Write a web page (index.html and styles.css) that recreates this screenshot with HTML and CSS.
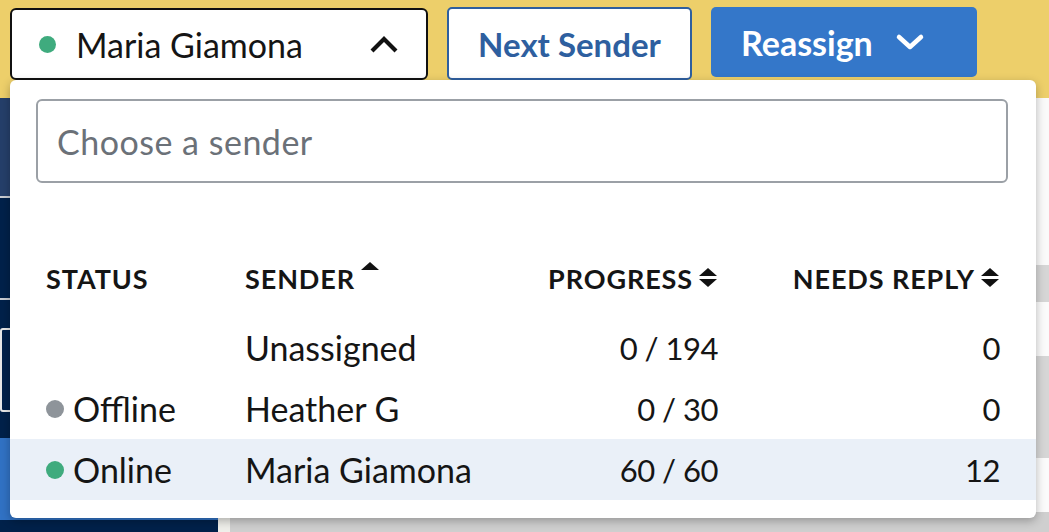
FILE: index.html
```html
<!DOCTYPE html>
<html>
<head>
<meta charset="utf-8">
<link rel="stylesheet" href="styles.css">
</head>
<body>
<div class="app">
  <header class="topbar">
    <div class="sender-select">
      <span class="dot dot-online"></span>
      <span class="select-label">Maria Giamona</span>
      <svg class="chev" width="30" height="19" viewBox="0 0 30 19"><path d="M3 16 L15 4 L27 16" fill="none" stroke="#111" stroke-width="4.2"/></svg>
    </div>
    <button class="btn btn-outline">Next Sender</button>
    <button class="btn btn-primary">Reassign
      <svg class="chev-down" width="30" height="18" viewBox="0 0 30 18"><path d="M4 4 L15 14 L26 4" fill="none" stroke="#fff" stroke-width="4.5" stroke-linecap="round" stroke-linejoin="round"/></svg>
    </button>
  </header>
  <div class="body-area">
    <aside class="sidebar">
      <div class="side-item side-active"></div>
      <div class="side-item"></div>
      <div class="side-item side-box"></div>
      <div class="side-item side-gap"></div>
      <div class="side-item side-blue"></div>
    </aside>
    <main class="main">
      <div class="main-edge"></div>
      <div class="main-content">
        <div class="band band-light"></div>
        <div class="band band-gray b1"></div>
        <div class="band band-white b2"></div>
        <div class="band band-gray b3"></div>
        <div class="band band-white b4"></div>
        <div class="band band-gray b5"></div>
      </div>
    </main>
  </div>

  <div class="dropdown">
    <div class="search">Choose a sender</div>
    <div class="table">
      <div class="trow thead">
        <div class="cell">STATUS</div>
        <div class="cell">SENDER<span class="sort-up"></span></div>
        <div class="cell right">PROGRESS<span class="sort-both"></span></div>
        <div class="cell right">NEEDS REPLY<span class="sort-both"></span></div>
      </div>
      <div class="trow">
        <div class="cell"></div>
        <div class="cell">Unassigned</div>
        <div class="cell right num">0 / 194</div>
        <div class="cell right num">0</div>
      </div>
      <div class="trow">
        <div class="cell"><span class="dot dot-offline"></span>Offline</div>
        <div class="cell">Heather G</div>
        <div class="cell right num">0 / 30</div>
        <div class="cell right num">0</div>
      </div>
      <div class="trow selected">
        <div class="cell"><span class="dot dot-online"></span>Online</div>
        <div class="cell">Maria Giamona</div>
        <div class="cell right num">60 / 60</div>
        <div class="cell right num">12</div>
      </div>
    </div>
  </div>
</div>
</body>
</html>
```

FILE: styles.css
```css
* { box-sizing: border-box; }
html, body { margin: 0; padding: 0; }
body {
  width: 1049px;
  height: 532px;
  overflow: hidden;
  font-family: Lato, "Liberation Sans", sans-serif;
  color: #151515;
  background: #f4f4f2;
}
.app { position: relative; width: 1049px; height: 532px; }

.topbar {
  height: 98px;
  background: #edcf6a;
  display: flex;
  align-items: flex-start;
  padding: 7px 0 0 10px;
}
.sender-select {
  width: 418px;
  height: 72px;
  margin-top: 1px;
  border: 2px solid #111;
  border-radius: 6px;
  background: #fff;
  display: flex;
  align-items: center;
  padding: 0 27px 0 27px;
}
.sender-select .dot { width: 17px; height: 17px; margin-right: 20px; }
.select-label { font-size: 34px; flex: 1; }
.chev { display: block; }

.btn {
  font-family: inherit;
  font-weight: 700;
  font-size: 33px;
  border-radius: 5px;
  display: flex;
  align-items: center;
  justify-content: center;
  cursor: pointer;
}
.btn-outline {
  margin-left: 19px;
  width: 245px;
  height: 73px;
  background: #fff;
  color: #2e5f9f;
  border: 2px solid #2e5f9f;
}
.btn-primary {
  margin-left: 19px;
  width: 266px;
  height: 70px;
  background: #3477c9;
  color: #fff;
  border: none;
  justify-content: flex-start;
  padding: 0 0 0 30px;
  font-size: 34px;
}
.chev-down { margin-left: 22px; display: block; }

.body-area { display: flex; height: 434px; }
.sidebar {
  width: 218px;
  background: #00214a;
  display: flex;
  flex-direction: column;
}
.side-item { height: 102px; border-bottom: 2px solid #c9ccd2; }
.side-active { height: 100px; background: #253f6a; }
.side-box {
  height: 84px;
  margin-top: 28px;
  border: 2px solid #e8e8e8;
  border-radius: 3px;
}
.side-gap { height: 26px; border: none; }
.side-blue { height: 82px; background: #3172c4; border: none; }

.main { flex: 1; display: flex; }
.main-edge { width: 12px; background: #efefea; }
.main-content { flex: 1; display: flex; flex-direction: column; background: #fafafa; }
.band { flex: none; }
.band-light { height: 167px; background: #fafafa; }
.band-gray { background: #d6d6d6; }
.band-white { background: #fbfbfb; }
.b1 { height: 37px; }
.b2 { height: 54px; }
.b3 { height: 102px; }
.b4 { height: 54px; }
.b5 { height: 20px; background: #cfcfcf; }

.dropdown {
  position: absolute;
  left: 10px;
  top: 80px;
  width: 1026px;
  height: 438px;
  background: #fff;
  border-radius: 6px;
  box-shadow: 0 3px 10px rgba(0,0,0,0.28);
  padding: 19px 28px 0 26px;
}
.search {
  height: 84px;
  border: 2px solid #9ba0a6;
  border-radius: 6px;
  display: flex;
  align-items: center;
  padding-left: 19px;
  font-size: 34px;
  color: #6b7178;
  letter-spacing: 0.5px;
}
.table { margin: 65px -28px 0 -26px; }
.trow {
  display: grid;
  grid-template-columns: 199px 260px 213px 282px;
  padding-left: 36px;
  height: 61px;
  align-items: center;
  font-size: 34px;
}
.thead {
  height: 60px;
  margin-bottom: 9px;
  font-weight: 700;
  font-size: 27px;
  letter-spacing: 0.9px;
}
.num { font-size: 31px; letter-spacing: -0.5px; }
.selected { background: #eaf0f8; }
.cell { display: flex; align-items: center; white-space: nowrap; }
.cell.right { justify-content: flex-end; }

.dot { display: inline-block; width: 18px; height: 18px; border-radius: 50%; margin-right: 9px; flex: none; }
.dot-online { background: #3fab7e; }
.dot-offline { background: #8e949a; }

.sort-up, .sort-both {
  display: inline-block;
  position: relative;
  width: 19px;
  height: 22px;
  margin-left: 6px;
}
.sort-up::before, .sort-both::before, .sort-both::after {
  content: "";
  position: absolute;
  left: 0;
  border-left: 9.5px solid transparent;
  border-right: 9.5px solid transparent;
}
.sort-up::before, .sort-both::before {
  top: 1px;
  border-bottom: 8px solid #111;
}
.sort-up { transform: translateY(-6px); }
.sort-both::after {
  top: 12px;
  border-top: 8px solid #111;
}
```
